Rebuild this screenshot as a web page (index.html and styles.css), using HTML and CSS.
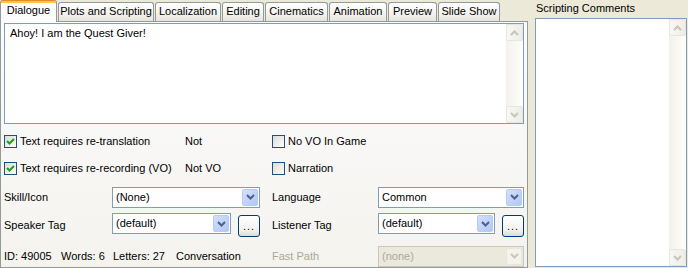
FILE: index.html
```html
<!DOCTYPE html>
<html>
	<head>
		<meta charset="UTF-8">
		<title>Dialogue</title>
		<link rel="stylesheet" href="styles.css">
	</head>
	<body>
		<div class="window">
			<div class="tabctl">
				<div class="tabstrip">
					<div class="tab active">Dialogue</div>
					<div class="tab">Plots and Scripting</div>
					<div class="tab">Localization</div>
					<div class="tab">Editing</div>
					<div class="tab">Cinematics</div>
					<div class="tab">Animation</div>
					<div class="tab">Preview</div>
					<div class="tab">Slide Show</div>
				</div>
				<div class="panel">
					<div class="memo">
						<div class="memo-text">Ahoy! I am the Quest Giver!</div>
						<div class="vscroll">
							<div class="sbtn"><svg width="9" height="6" viewBox="0 0 9 6"><path d="M1 5 L4.5 1.5 L8 5" fill="none" stroke="#c6c5bb" stroke-width="2"/></svg></div>
							<div class="track"></div>
							<div class="sbtn"><svg width="9" height="6" viewBox="0 0 9 6"><path d="M1 1 L4.5 4.5 L8 1" fill="none" stroke="#c6c5bb" stroke-width="2"/></svg></div>
						</div>
					</div>

					<div class="fields">
						<!-- 行1 -->
						<div class="pair">
							<label class="check wide"><span class="box"><svg width="11" height="11" viewBox="0 0 11 11"><path d="M2 5 L4.5 7.5 L9 3" fill="none" stroke="#21a121" stroke-width="2.2"/></svg></span>Text requires re-translation</label>
							<span>Not</span>
						</div>
						<label class="check right"><span class="box"></span>No VO In Game</label>

						<!-- 行2 -->
						<div class="pair">
							<label class="check wide"><span class="box"><svg width="11" height="11" viewBox="0 0 11 11"><path d="M2 5 L4.5 7.5 L9 3" fill="none" stroke="#21a121" stroke-width="2.2"/></svg></span>Text requires re-recording (VO)</label>
							<span>Not VO</span>
						</div>
						<label class="check right"><span class="box"></span>Narration</label>

						<!-- 行3 -->
						<div class="lbl">Skill/Icon</div>
						<div class="combo">
							<span class="combo-val">(None)</span>
							<span class="drop"><svg width="9" height="6" viewBox="0 0 9 6"><path d="M1 1 L4.5 4.5 L8 1" fill="none" stroke="#4d6185" stroke-width="2"/></svg></span>
						</div>
						<div class="lbl col4">Language</div>
						<div class="combo">
							<span class="combo-val">Common</span>
							<span class="drop"><svg width="9" height="6" viewBox="0 0 9 6"><path d="M1 1 L4.5 4.5 L8 1" fill="none" stroke="#4d6185" stroke-width="2"/></svg></span>
						</div>

						<!-- 行4 -->
						<div class="lbl">Speaker Tag</div>
						<div class="tagrow">
							<div class="combo short">
								<span class="combo-val">(default)</span>
								<span class="drop"><svg width="9" height="6" viewBox="0 0 9 6"><path d="M1 1 L4.5 4.5 L8 1" fill="none" stroke="#4d6185" stroke-width="2"/></svg></span>
							</div>
							<div class="dots">...</div>
						</div>
						<div class="lbl col4">Listener Tag</div>
						<div class="tagrow">
							<div class="combo shorter">
								<span class="combo-val">(default)</span>
								<span class="drop"><svg width="9" height="6" viewBox="0 0 9 6"><path d="M1 1 L4.5 4.5 L8 1" fill="none" stroke="#4d6185" stroke-width="2"/></svg></span>
							</div>
							<div class="dots">...</div>
						</div>

						<!-- 行5 -->
						<div class="status">
							<span class="s-id">ID: 49005</span>
							<span class="s-words">Words: 6</span>
							<span class="s-letters">Letters: 27</span>
							<span>Conversation</span>
						</div>
						<div class="lbl col4 disabled">Fast Path</div>
						<div class="combo off">
							<span class="combo-val">(none)</span>
							<span class="drop"><svg width="9" height="6" viewBox="0 0 9 6"><path d="M1 1 L4.5 4.5 L8 1" fill="none" stroke="#c9c7ba" stroke-width="2"/></svg></span>
						</div>
					</div>
				</div>
			</div>

			<div class="side">
				<div class="side-title">Scripting Comments</div>
				<div class="memo side-memo">
					<div class="memo-text"></div>
					<div class="vscroll">
						<div class="sbtn"><svg width="9" height="6" viewBox="0 0 9 6"><path d="M1 5 L4.5 1.5 L8 5" fill="none" stroke="#c6c5bb" stroke-width="2"/></svg></div>
						<div class="track"></div>
						<div class="sbtn"><svg width="9" height="6" viewBox="0 0 9 6"><path d="M1 1 L4.5 4.5 L8 1" fill="none" stroke="#c6c5bb" stroke-width="2"/></svg></div>
					</div>
				</div>
			</div>
		</div>
	</body>
</html>
```

FILE: styles.css
```css
* {margin: 0; padding: 0; box-sizing: border-box;}
body {
	background: #ece9d8;
	font: 11px/13px "Liberation Sans", Arial, sans-serif;
	color: #000;
	overflow: hidden;
}
.window {
	display: flex;
	width: 688px;
	height: 268px;
}

/* tab control */
.tabctl {
	width: 528px;
	display: flex;
	flex-direction: column;
}
.tabstrip {
	display: flex;
	align-items: flex-end;
	height: 21px;
}
.tab {
	height: 19px;
	margin-left: 1px;
	border: 1px solid #919b9c;
	border-bottom: none;
	border-radius: 3px 3px 0 0;
	background: linear-gradient(#fff, #f3f2ee 60%, #e4e3dc);
	text-align: center;
	line-height: 17px;
	white-space: nowrap;
}
.tab.active {
	position: relative;
	z-index: 1;
	height: 22px;
	margin-left: 0;
	margin-bottom: -1px;
	border-top: none;
	background: linear-gradient(#e68b2c 0, #e68b2c 1px, #ffc73c 1px, #ffc73c 3px, #fff 3px, #fcfcfe);
	padding-top: 3px;
	line-height: 15px;
}
.tab:nth-child(1) {width: 57px;}
.tab:nth-child(2) {width: 96px;}
.tab:nth-child(3) {width: 66px;}
.tab:nth-child(4) {width: 42px;}
.tab:nth-child(5) {width: 63px;}
.tab:nth-child(6) {width: 58px;}
.tab:nth-child(7) {width: 49px;}
.tab:nth-child(8) {width: 62px;}

.panel {
	flex: 1;
	border: 1px solid #919b9c;
	background: linear-gradient(#fcfcfe, #f4f3ee);
	padding: 1px 3px 0 3px;
	overflow: hidden;
}

/* memo boxes */
.memo {
	display: flex;
	height: 101px;
	border: 1px solid #7f9db9;
	background: #fff;
}
.memo-text {
	flex: 1;
	padding: 3px 5px;
}
.vscroll {
	width: 17px;
	display: flex;
	flex-direction: column;
	background: linear-gradient(to right, #f3f1ea, #fefefb);
}
.vscroll .track {flex: 1;}
.sbtn {
	height: 17px;
	display: flex;
	align-items: center;
	justify-content: center;
	border: 1px solid #e6e5de;
	border-radius: 2px;
	background: linear-gradient(to right, #f8f8f4, #eeede6);
}

/* fields grid */
.fields {
	margin-top: 4px;
	display: grid;
	grid-template-columns: 108px 148px 12px 106px 146px;
	grid-template-rows: 27px 26px 32px 24px 38px;
	align-items: center;
}
.pair {
	grid-column: 1 / 3;
	display: flex;
	align-items: center;
}
.check {
	display: flex;
	align-items: center;
}
.check.wide {width: 181px;}
.check.right {grid-column: 4 / 6;}
.box {
	width: 13px;
	height: 13px;
	margin-right: 3px;
	border: 1px solid #1c5180;
	background: linear-gradient(135deg, #dcdcd7, #fdfdfb);
	display: flex;
	align-items: center;
	justify-content: center;
}
.lbl {grid-column: 1;}
.lbl.col4 {grid-column: 4;}
.lbl.disabled {color: #aca899;}

.combo {
	height: 21px;
	display: flex;
	align-items: center;
	border: 1px solid #7f9db9;
	background: #fff;
}
.combo.short {width: 119px;}
.combo.shorter {width: 117px;}
.combo-val {
	flex: 1;
	padding-left: 3px;
}
.drop {
	width: 16px;
	height: 17px;
	margin: 1px;
	display: flex;
	align-items: center;
	justify-content: center;
	border: 1px solid #b8cbf5;
	border-radius: 2px;
	background: linear-gradient(135deg, #d3e0fd, #b3c7f5);
}
.combo.off {
	border-color: #c9c7ba;
	background: #ebe9dc;
	color: #aca899;
}
.combo.off .drop {
	border-color: #e8e6dc;
	background: #f4f3ec;
}

.tagrow {
	height: 24px;
	display: flex;
	justify-content: space-between;
}
.tagrow .combo {align-self: flex-start;}
.dots {
	align-self: flex-end;
	width: 22px;
	height: 22px;
	border: 1px solid #003c74;
	border-radius: 3px;
	background: linear-gradient(#fff, #f3f2ed 70%, #dedbcf);
	text-align: center;
	line-height: 21px;
	letter-spacing: 1px;
}
.tagrow:nth-of-type(1) {}

.status {
	grid-column: 1 / 3;
	display: flex;
}
.s-id {width: 57px;}
.s-words {width: 52px;}
.s-letters {width: 63px;}

/* right side */
.side {
	flex: 1;
	padding: 2px 0 0 7px;
}
.side-title {
	height: 13px;
	margin-bottom: 3px;
	padding-left: 1px;
}
.side-memo {
	width: 152px;
	height: 249px;
}
```
